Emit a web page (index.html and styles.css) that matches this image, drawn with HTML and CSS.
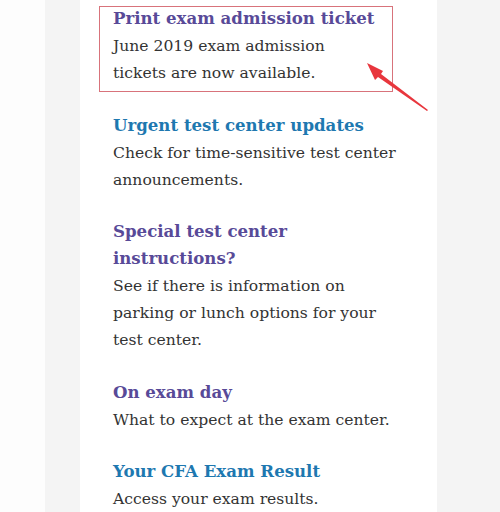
FILE: index.html
```html
<!DOCTYPE html>
<html lang="en">
<head>
    <meta charset="UTF-8">
    <title>Exam Updates</title>
    <link rel="stylesheet" href="styles.css">
</head>
<body>
    <div class="page">
        <div class="card">
            <!-- annotation marks -->
            <div class="highlight"></div>
            <svg class="arrow" width="80" height="60" viewBox="0 0 80 60">
                <polygon points="7,5 23,13 21,16 68,52 67,53 18,19 15,22" fill="#e8363d"/>
            </svg>

            <div class="item">
                <h3 class="purple">Print exam admission ticket</h3>
                <p>June 2019 exam admission<br>tickets are now available.</p>
            </div>
            <div class="item">
                <h3 class="blue">Urgent test center updates</h3>
                <p>Check for time-sensitive test center<br>announcements.</p>
            </div>
            <div class="item">
                <h3 class="purple">Special test center<br>instructions?</h3>
                <p>See if there is information on<br>parking or lunch options for your<br>test center.</p>
            </div>
            <div class="item">
                <h3 class="purple">On exam day</h3>
                <p>What to expect at the exam center.</p>
            </div>
            <div class="item">
                <h3 class="blue">Your CFA Exam Result</h3>
                <p>Access your exam results.</p>
            </div>
        </div>
    </div>
</body>
</html>
```
FILE: styles.css
```css
* {
    margin: 0;
    padding: 0;
    box-sizing: border-box;
}

body {
    background: #fdfdfd;
    font-family: 'DejaVu Serif', Georgia, serif;
    color: #333;
    overflow: hidden;
}

.page {
    margin-left: 45px;
    padding-left: 35px;
    background: #f4f4f4;
    height: 512px;
}

.card {
    position: relative;
    width: 357px;
    height: 100%;
    background: #fff;
    padding: 5px 0 0 33px;
}

.item {
    margin-bottom: 24.5px;
}

h3 {
    font-size: 16.6px;
    font-weight: bold;
    line-height: 27px;
    white-space: nowrap;
}

p {
    font-size: 15.6px;
    line-height: 27px;
    white-space: nowrap;
    margin-top: 1px;
}

.purple {
    color: #584a98;
}

.blue {
    color: #1e78b0;
}

.highlight {
    position: absolute;
    left: 19px;
    top: 6px;
    width: 294px;
    height: 86px;
    border: 1px solid #d8737b;
}

.arrow {
    position: absolute;
    left: 280px;
    top: 58px;
}
```
